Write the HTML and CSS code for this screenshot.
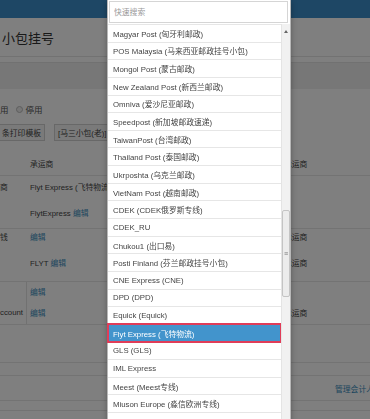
FILE: index.html
```html
<!DOCTYPE html>
<html lang="zh-CN">
<head>
  <meta charset="UTF-8" />
  <meta name="viewport" content="width=device-width, initial-scale=1.0"/>
  <title>小包挂号</title>
  <link rel="stylesheet" href="styles.css">
</head>
<body>
  <header class="topbar"></header>

  <main class="page">
    <h1 class="page-title">小包挂号</h1>
    <div class="filter-band"></div>

    <div class="status-row">
      <span>用</span>
      <span class="radio"></span>
      <span>停用</span>
    </div>

    <div class="btn-row">
      <button class="btn btn-cut">条打印模板</button>
      <button class="btn">[马三小包(老)] Flyt</button>
    </div>

    <div class="grid">
      <div class="row row-head line"><div class="c1"></div><div class="c2">承运商</div><div class="c3">承运商</div></div>
      <div class="row row-a"><div class="c1">商</div><div class="c2">Flyt Express (飞特物流)</div><div class="c3"></div></div>
      <div class="row row-b line"><div class="c1"></div><div class="c2">FlytExpress <a class="link">编辑</a></div><div class="c3"></div></div>
      <div class="row row-c"><div class="c1">钱</div><div class="c2"><a class="link">编辑</a></div><div class="c3">承运商</div></div>
      <div class="row row-d line"><div class="c1"></div><div class="c2">FLYT <a class="link">编辑</a></div><div class="c3">承运商</div></div>
      <div class="row row-e"><div class="c1 split"></div><div class="c2"><a class="link">编辑</a></div><div class="c3"></div></div>
      <div class="row row-f line"><div class="c1 split">ccount</div><div class="c2"><a class="link">编辑</a></div><div class="c3">承运商</div></div>
      <div class="row row-g line"></div>
      <div class="row row-h line"></div>
      <div class="row row-link line"><a class="link">管理会计人</a></div>
      <div class="row row-i line"></div>
    </div>
  </main>

  <div class="dim"></div>

  <div class="picker">
    <input class="picker-search" type="text" placeholder="快速搜索" />
    <div class="picker-body">
      <ul class="picker-list">
        <li>Magyar Post (匈牙利邮政)</li>
        <li>POS Malaysia (马来西亚邮政挂号小包)</li>
        <li>Mongol Post (蒙古邮政)</li>
        <li>New Zealand Post (新西兰邮政)</li>
        <li>Omniva (爱沙尼亚邮政)</li>
        <li>Speedpost (新加坡邮政速递)</li>
        <li>TaiwanPost (台湾邮政)</li>
        <li>Thailand Post (泰国邮政)</li>
        <li>Ukrposhta (乌克兰邮政)</li>
        <li>VietNam Post (越南邮政)</li>
        <li>CDEK (CDEK俄罗斯专线)</li>
        <li>CDEK_RU</li>
        <li>Chukou1 (出口易)</li>
        <li>Posti Finland (芬兰邮政挂号小包)</li>
        <li>CNE Express (CNE)</li>
        <li>DPD (DPD)</li>
        <li>Equick (Equick)</li>
        <li class="is-active">Flyt Express (飞特物流)</li>
        <li>GLS (GLS)</li>
        <li>IML Express</li>
        <li>Meest (Meest专线)</li>
        <li>Miuson Europe (淼信欧洲专线)</li>
        <li></li>
      </ul>
      <div class="scrollbar">
        <span class="scroll-up"></span>
        <span class="scroll-thumb">≡</span>
      </div>
    </div>
  </div>
</body>
</html>
```

FILE: styles.css
```css
* {
  box-sizing: border-box;
}

body {
  margin: 0;
  height: 100vh;
  overflow: hidden;
  font-family: 'Liberation Sans', 'Noto Sans CJK SC', sans-serif;
  font-size: 7.8px;
  color: #444;
  background: #fff;
}

.topbar {
  height: 18px;
  background: #3c8fca;
}

.page-title {
  margin: 0;
  height: 39px;
  padding: 3px 0 0 2px;
  line-height: 35px;
  font-size: 13px;
  font-weight: normal;
  color: #333;
  border-bottom: 1px solid #e4e4e4;
}

.filter-band {
  margin-top: 5px;
  height: 27px;
  background: #eeeeee;
  border-top: 1px solid #e2e2e2;
}

.status-row {
  margin-top: 12px;
  height: 16px;
  display: flex;
  align-items: center;
  font-size: 8.5px;
  color: #555;
}

.radio {
  width: 7px;
  height: 7px;
  margin: 0 3px 0 7px;
  border: 1px solid #bbb;
  border-radius: 50%;
  background: #eee;
}

.btn-row {
  margin-top: 7px;
  display: flex;
  gap: 9px;
}

.btn {
  height: 17px;
  padding: 0 3px;
  font-family: inherit;
  font-size: 7.8px;
  color: #444;
  background: #f4f4f4;
  border: 1px solid #d0d0d0;
  white-space: nowrap;
}

.btn-cut {
  margin-left: -2px;
}

.grid {
  margin-top: 10px;
}

.row {
  display: flex;
  align-items: center;
  white-space: nowrap;
}

.row.line {
  border-bottom: 1px solid #e6e6e6;
}

.row-head { height: 25px; }
.row-a { height: 21px; }
.row-b { height: 32px; }
.row-c { height: 15px; }
.row-d { height: 38px; }
.row-e { height: 19px; }
.row-f { height: 24px; }
.row-g { height: 38px; }
.row-h { height: 13px; }
.row-link { height: 25px; padding-left: 335px; }
.row-i { height: 10px; }

.c1 {
  width: 27px;
  align-self: stretch;
  display: flex;
  align-items: center;
}

.c1.split {
  border-right: 1px solid #e2e2e2;
}

.c2 {
  width: 253px;
  padding-left: 3px;
}

.c3 {
  padding-left: 4px;
}

.link {
  color: #3c8dbc;
}

.dim {
  position: fixed;
  inset: 0;
  background: rgba(0, 0, 0, 0.5);
  z-index: 10;
}

.picker {
  position: absolute;
  top: 0;
  left: 107px;
  width: 184px;
  z-index: 20;
  background: #fff;
  border: 1px solid #b8b8b8;
  border-top: 0;
  box-shadow: 0 2px 6px rgba(0, 0, 0, 0.3);
}

.picker-search {
  display: block;
  width: 179px;
  height: 22px;
  margin: 1px 2px 1px 1px;
  padding: 0 4px;
  font-family: inherit;
  font-size: 7.8px;
  border: 1px solid #d5d5d5;
  outline: none;
}

.picker-search::placeholder {
  color: #999;
}

.picker-body {
  display: flex;
}

.picker-list {
  flex: 1;
  margin: 0;
  padding: 0;
  list-style: none;
}

.picker-list li {
  height: 17.65px;
  display: flex;
  align-items: center;
  padding-left: 5px;
  border-top: 1px solid #e6e6e6;
  color: #444;
  white-space: nowrap;
}

.picker-list li.is-active {
  background: #4294cc;
  color: #fff;
  outline: 2px solid #e03c58;
  outline-offset: -1px;
}

.scrollbar {
  width: 9px;
  background: #f1f1f1;
  border-left: 1px solid #e4e4e4;
  display: flex;
  flex-direction: column;
  align-items: center;
}

.scroll-up {
  margin-top: 6px;
  width: 0;
  height: 0;
  border-left: 2.5px solid transparent;
  border-right: 2.5px solid transparent;
  border-bottom: 3px solid #666;
}

.scroll-thumb {
  margin-top: 177px;
  width: 8px;
  height: 87px;
  background: #ececec;
  border: 1px solid #c4c4c4;
  border-radius: 2px;
  display: flex;
  align-items: center;
  justify-content: center;
  font-size: 7px;
  color: #777;
}
```
